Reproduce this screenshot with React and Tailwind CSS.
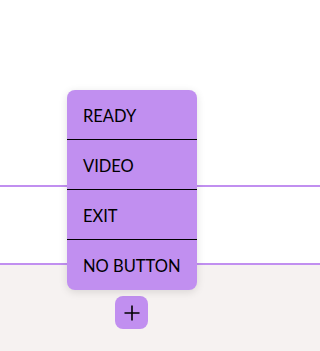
import { useState } from 'react';

const options = ['READY', 'VIDEO', 'EXIT', 'NO BUTTON'];

function PlusIcon() {
  return (
    <svg width="16" height="16" viewBox="0 0 16 16" fill="none" stroke="black" strokeWidth="1.6">
      <path d="M8 0.5v15M0.5 8h15" />
    </svg>
  );
}

export default function App() {
  const [open, setOpen] = useState(true);

  return (
    <div className="flex h-[351px] w-full flex-col bg-white font-['Lato','Noto_Sans',sans-serif] text-black">
      <div className="h-[187px] shrink-0 border-b-2 border-[#c18ff0]" />
      <div className="h-[78px] shrink-0 border-b-2 border-[#c18ff0]" />
      <div className="flex-1 bg-[#f6f2f1] pl-[115px] pt-[31px]">
        <div className="relative w-[33px]">
          {open && (
            <div className="absolute bottom-[39px] left-[-48px] z-10 w-[130px] overflow-hidden rounded-lg bg-[#c18ff0] shadow-[0_2px_8px_rgba(0,0,0,0.12)]">
              {options.map((o, i) => (
                <div
                  key={o}
                  className={`flex h-[50px] items-center px-4 pt-[3px] text-[16.5px] ${i < options.length - 1 ? 'border-b border-black' : ''}`}
                >
                  {o}
                </div>
              ))}
            </div>
          )}
          <button
            onClick={() => setOpen(!open)}
            className="flex h-[33px] w-[33px] items-center justify-center rounded-lg bg-[#c18ff0]"
          >
            <PlusIcon />
          </button>
        </div>
      </div>
    </div>
  );
}
